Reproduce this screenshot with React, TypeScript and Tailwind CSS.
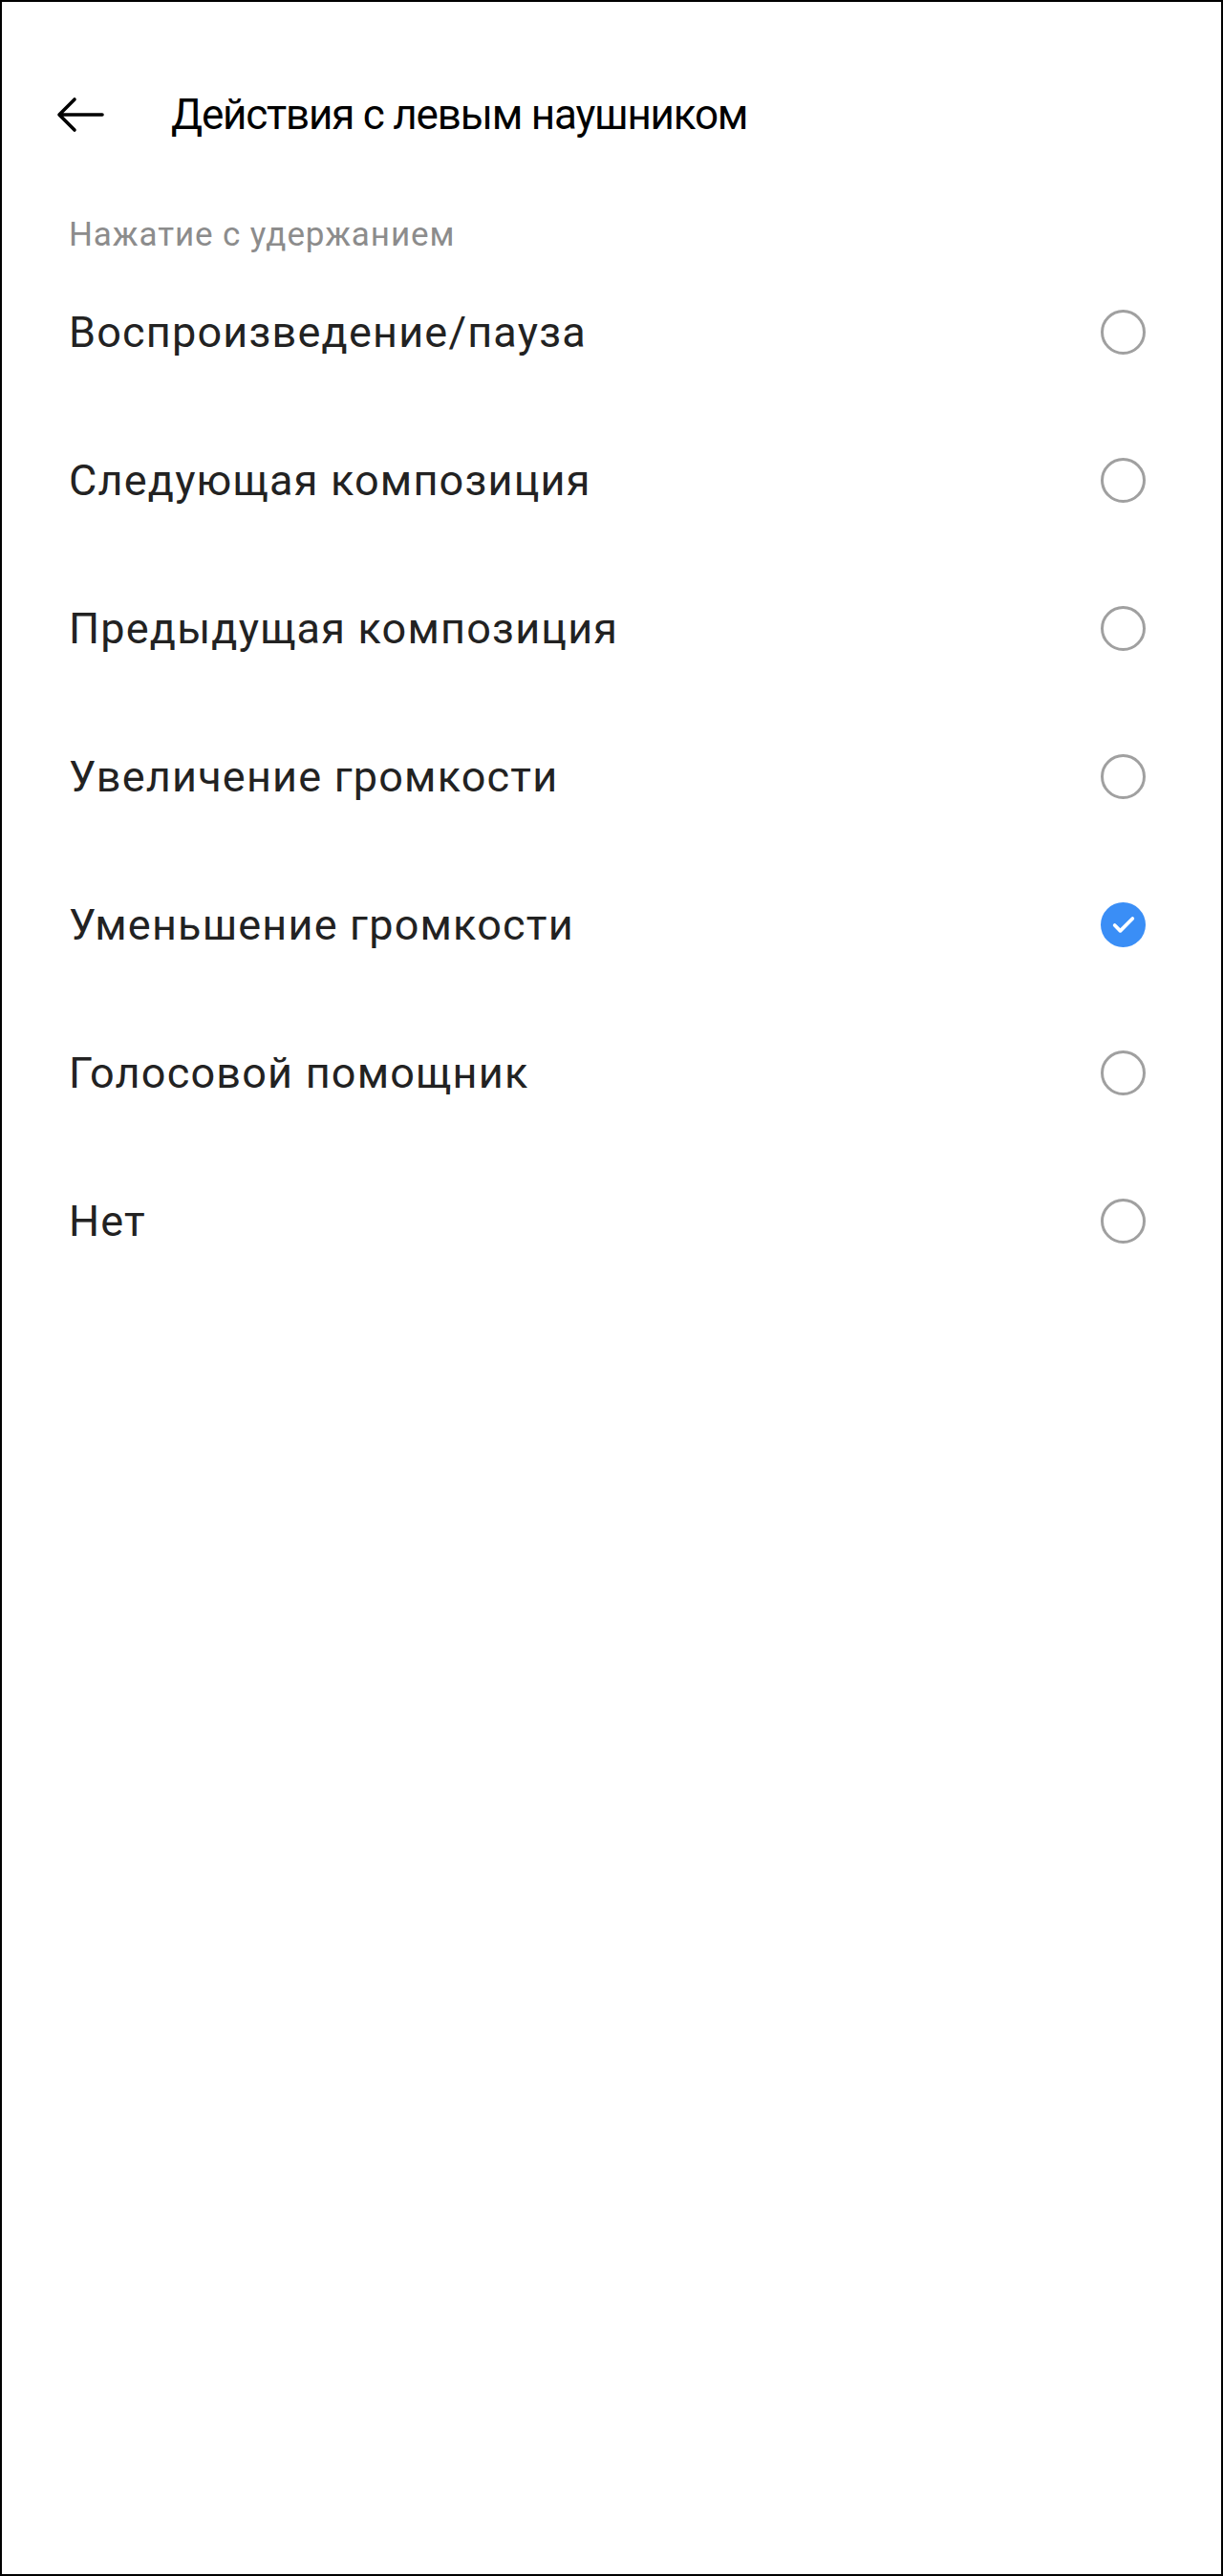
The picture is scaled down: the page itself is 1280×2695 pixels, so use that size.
import { Check } from "lucide-react";

const options = [
  "Воспроизведение/пауза",
  "Следующая композиция",
  "Предыдущая композиция",
  "Увеличение громкости",
  "Уменьшение громкости",
  "Голосовой помощник",
  "Нет",
];

const selected = "Уменьшение громкости";

function Radio({ checked }: { checked: boolean }) {
  if (checked) {
    return (
      <div className="w-[47px] h-[47px] rounded-full bg-[#3a8ef6] flex items-center justify-center">
        <Check size={28} strokeWidth={3.2} className="text-white" />
      </div>
    );
  }
  return <div className="w-[47px] h-[47px] rounded-full border-[3px] border-[#a0a0a0]" />;
}

export default function App() {
  return (
    <div
      className="w-full h-[2695px] bg-white border-2 border-black"
      style={{ fontFamily: "Roboto, 'Noto Sans', sans-serif" }}
    >
      {/* Header */}
      <div className="mt-[68px] h-[100px] flex items-center pl-[56px]">
        <svg width="52" height="40" viewBox="0 0 52 40" fill="none" className="shrink-0">
          <path
            d="M49 20H5M20 4L4 20l16 16"
            stroke="#000"
            strokeWidth="3.6"
            strokeLinecap="round"
            strokeLinejoin="round"
          />
        </svg>
        <h1 className="ml-[69px] text-[44px] leading-none text-black font-normal tracking-[-1.2px]">
          Действия с левым наушником
        </h1>
      </div>

      {/* Section */}
      <div className="pt-[52px] h-[100px] pl-[70px]">
        <div className="text-[35px] leading-[48px] text-[#8c8c8c] tracking-[0.9px]">
          Нажатие с удержанием
        </div>
      </div>

      {options.map((label) => (
        <div key={label} className="h-[155px] flex items-center justify-between pl-[70px] pr-[79px]">
          <span className="text-[45px] leading-none text-[#222] tracking-[1.2px]">{label}</span>
          <Radio checked={label === selected} />
        </div>
      ))}
    </div>
  );
}
